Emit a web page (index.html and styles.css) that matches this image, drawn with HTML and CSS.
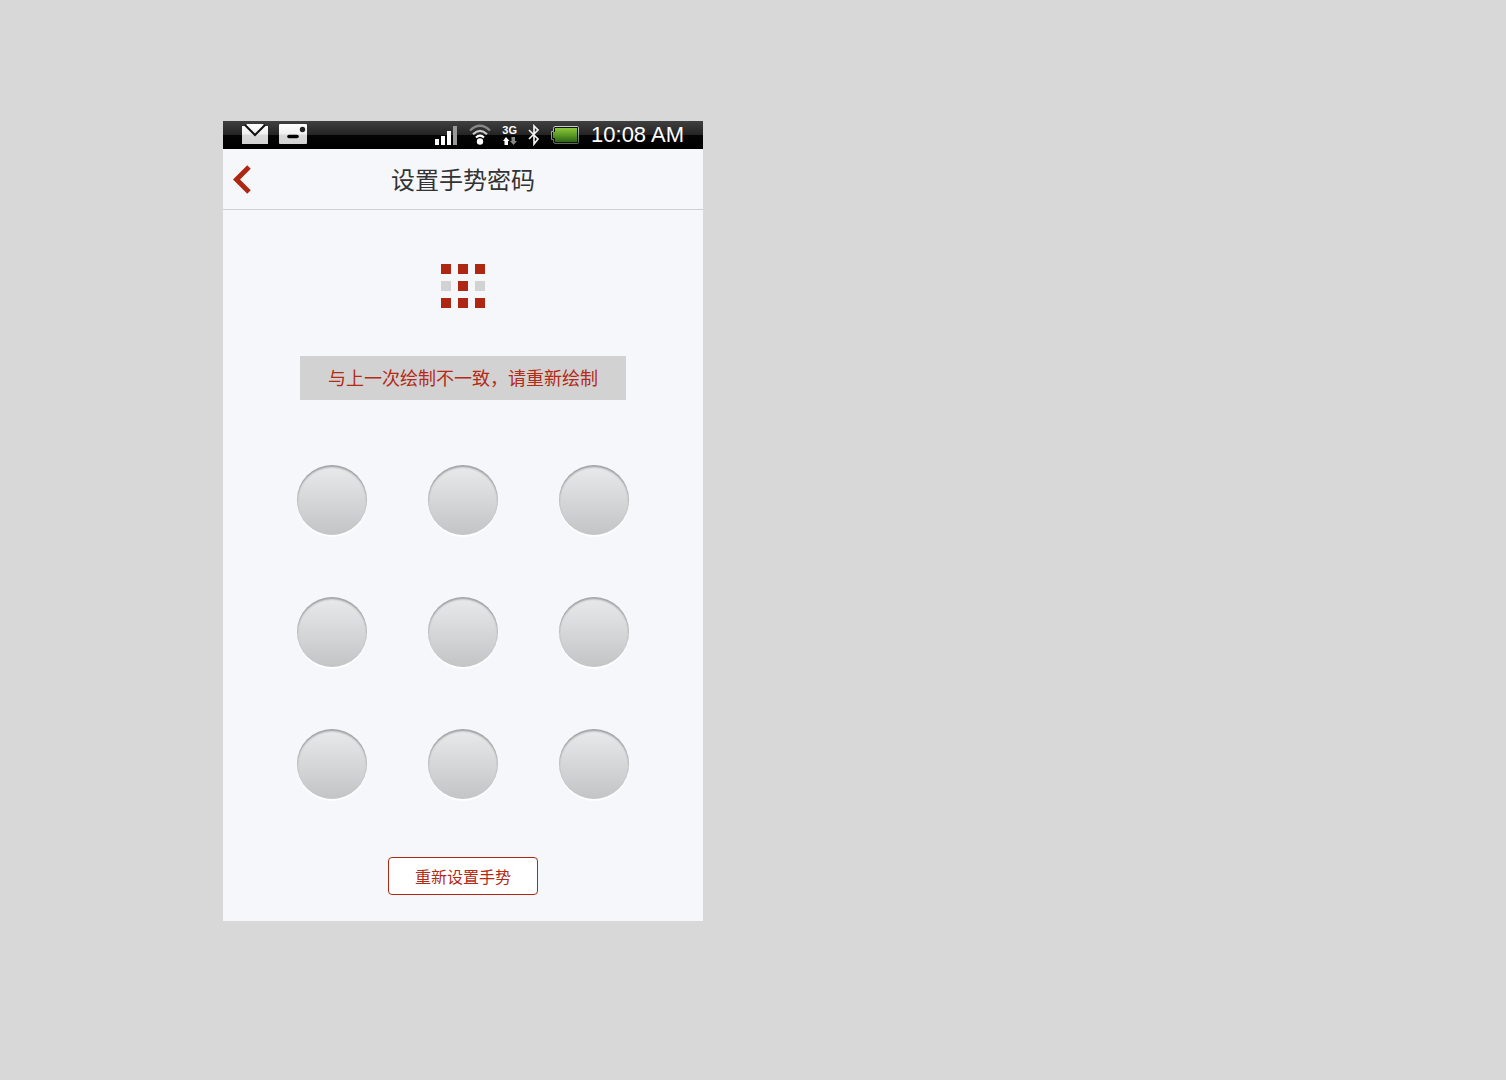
FILE: index.html
```html
<!DOCTYPE html>
<html lang="zh-CN">
<head>
<meta charset="utf-8">
<meta name="viewport" content="width=device-width, initial-scale=1">
<title>设置手势密码</title>
<link rel="stylesheet" href="styles.css">
</head>
<body>
<div class="phone">
  <div class="status">
    <div class="status-group notices">
      <svg width="28" height="22" viewBox="0 0 28 22" aria-hidden="true">
        <defs><linearGradient id="paper" x1="0" y1="0" x2="0" y2="1"><stop offset="0" stop-color="#fff"/><stop offset=".5" stop-color="#f0f0f0"/><stop offset=".55" stop-color="#dadada"/><stop offset="1" stop-color="#d2d2d2"/></linearGradient></defs>
        <path d="M1 2h3l2-2h16l2 2h3v18H1z" fill="url(#paper)"/>
        <path d="M4 1l10 10L24 1" fill="none" stroke="#111" stroke-width="2"/>
      </svg>
      <svg width="28" height="22" viewBox="0 0 28 22" aria-hidden="true">
        <rect width="28" height="20" rx="1" fill="url(#paper)"/>
        <circle cx="23.500" cy="5.500" r="2.700" fill="#222"/>
        <path d="M10 12.500h8" stroke="#000" stroke-width="3.600" stroke-linecap="round"/>
      </svg>
    </div>
    <div class="status-group signals">
      <svg class="bars" width="23" height="22" viewBox="0 0 23 22" aria-hidden="true">
        <path d="M0 15h4v6H0zM6 12h4v9H6zM12 7h4v14h-4z" fill="#fff"/>
        <path d="M18 2h4v19h-4z" fill="#999"/>
      </svg>
      <svg class="wifi" width="22" height="22" viewBox="0 0 22 22" aria-hidden="true">
        <g fill="none" stroke-width="2.200"><path d="M1 6.500Q11-3 21 6.500" stroke="#888"/><path d="M4 10.200Q11 3.500 18 10.200" stroke="#ccc"/><path d="M7 13.500Q11 9.500 15 13.500" stroke="#fff"/></g>
        <circle cx="11" cy="17.500" r="3.200" fill="#fff"/>
      </svg>
      <div class="network">
        <span>3G</span>
        <svg width="14" height="8" viewBox="0 0 14 8" aria-hidden="true"><path d="M3 0l3.500 4H5v4H1.500V4H0z" fill="#fff"/><path d="M10.500 8L7 4h1.500V0H12v4h2z" fill="#888"/></svg>
      </div>
      <svg class="bluetooth" width="12" height="22" viewBox="0 0 12 22" aria-hidden="true"><path d="M1 6l9 9-4 5V2l4 4-9 9" fill="none" stroke="#f2f2f2" stroke-width="1.700"/></svg>
      <svg class="battery" width="28" height="22" viewBox="0 0 28 22" aria-hidden="true">
        <defs><linearGradient id="charge" x1="0" y1="0" x2="0" y2="1"><stop offset="0" stop-color="#8cc63a"/><stop offset=".5" stop-color="#5c9a26"/><stop offset="1" stop-color="#2d6416"/></linearGradient><linearGradient id="shell" x1="0" y1="0" x2="0" y2="1"><stop offset="0" stop-color="#ccc"/><stop offset="1" stop-color="#666"/></linearGradient></defs>
        <path d="M4 2.500h22.500q1 0 1 1v15q0 1-1 1H4q-1.500 0-1.500-2v-2h-2v-8h2v-3q0-2 1.500-2z" fill="#0c1606" stroke="url(#shell)"/>
        <path d="M5 4h21v14H4v-4H2V8h2V4z" fill="url(#charge)"/>
      </svg>
      <time>10:08 AM</time>
    </div>
  </div>
  <header class="topbar">
    <button class="back" type="button" aria-label="返回">
      <svg width="18" height="30" viewBox="0 0 18 30" aria-hidden="true"><path d="M16 3L3.500 15.500 16 28" fill="none" stroke="#ae2712" stroke-width="5"/></svg>
    </button>
    <h1>设置手势密码</h1>
  </header>
  <main class="content">
    <div class="preview" role="img" aria-label="手势预览">
      <i class="on"></i><i class="on"></i><i class="on"></i>
      <i></i><i class="on"></i><i></i>
      <i class="on"></i><i class="on"></i><i class="on"></i>
    </div>
    <p class="message" role="alert">与上一次绘制不一致，请重新绘制</p>
    <div class="pad">
      <button class="dot" type="button" aria-label="1"></button>
      <button class="dot" type="button" aria-label="2"></button>
      <button class="dot" type="button" aria-label="3"></button>
      <button class="dot" type="button" aria-label="4"></button>
      <button class="dot" type="button" aria-label="5"></button>
      <button class="dot" type="button" aria-label="6"></button>
      <button class="dot" type="button" aria-label="7"></button>
      <button class="dot" type="button" aria-label="8"></button>
      <button class="dot" type="button" aria-label="9"></button>
    </div>
    <button class="reset" type="button">重新设置手势</button>
  </main>
</div>
</body>
</html>
```
FILE: styles.css
```css
* { box-sizing: border-box; }
body {
  margin: 0;
  min-height: 100vh;
  padding: 121px 0 121px 223px;
  background: #d8d8d8;
  font-family: "Liberation Sans", "Noto Sans CJK SC", sans-serif;
}
svg { display: block; }
button { padding: 0; font-family: inherit; cursor: pointer; }
.phone { max-width: 480px; background: #f5f7fb; }

.status {
  display: flex;
  justify-content: space-between;
  height: 28px;
  padding: 0 19px 0 18px;
  background: linear-gradient(#404040, #242424 50%, #050505 50%, #000);
  color: #fff;
}
.status-group { display: flex; align-items: center; }
.notices { gap: 10px; }
.signals { gap: 11px; }
.network {
  display: flex;
  flex-direction: column;
  align-items: center;
  gap: 2px;
  font-size: 11px;
  font-weight: bold;
  line-height: 10px;
}
time { padding-left: 1px; font-size: 22px; line-height: 28px; }

.topbar {
  display: grid;
  grid-template-columns: 40px 1fr 40px;
  align-items: center;
  height: 61px;
  border-bottom: 1px solid #cfd0d3;
}
.back {
  height: 60px;
  padding-left: 10px;
  border: 0;
  background: none;
}
h1 {
  margin: 0;
  color: #333;
  font-family: "Noto Sans CJK SC", sans-serif;
  font-size: 24px;
  font-weight: 400;
  line-height: 60px;
  text-align: center;
}

.content {
  display: flex;
  flex-direction: column;
  align-items: center;
  padding: 54px 0 26px;
}
.preview {
  display: grid;
  grid-template-columns: repeat(3, 10px);
  grid-auto-rows: 10px;
  gap: 7px;
}
.preview i { background: #d2d2d2; }
.preview .on { background: #ae2712; }
.message {
  margin: 48px 0 65px;
  padding: 2px 28px 0;
  background: #d2d2d2;
  color: #b32a17;
  font-size: 18px;
  line-height: 42px;
}
.pad {
  display: grid;
  grid-template-columns: repeat(3, 70px);
  gap: 62px 61px;
}
.dot {
  height: 70px;
  border: 0;
  border-radius: 50%;
  background: linear-gradient(#e9eaec, #c3c4c6);
  box-shadow: inset 0 2px 2px rgba(0, 0, 0, .32), 0 2px 1px #fff;
}
.reset {
  height: 38px;
  margin-top: 58px;
  padding: 0 26px;
  border: 1px solid #ae2712;
  border-radius: 4px;
  background: #fff;
  color: #b32a17;
  font-size: 16px;
}
```
